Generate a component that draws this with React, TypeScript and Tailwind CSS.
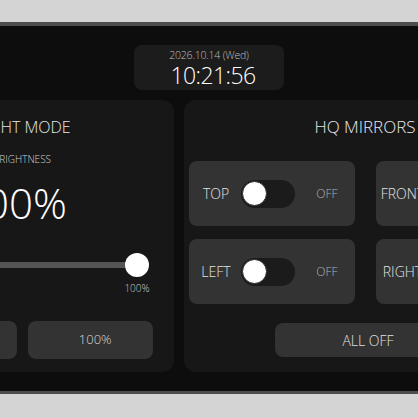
import React from 'react';

const FONT = { fontFamily: '"Open Sans", "Noto Sans", sans-serif' };

function Toggle({ on }: { on: boolean }) {
  return (
    <div className="w-[54px] h-[28px] rounded-full bg-[#1b1b1b] flex items-center px-[1px]">
      <div
        className={`w-[25px] h-[25px] rounded-full bg-white border border-[#2a2a2a] ${on ? 'ml-auto' : ''}`}
      />
    </div>
  );
}

function MirrorTile({ label, on }: { label: string; on: boolean }) {
  return (
    <div className="h-[65px] rounded-lg bg-[#333333] flex items-center pl-[5px] pr-[17px]">
      <div className="w-[44px] text-center text-[14px] text-[#e2e2e2]">{label}</div>
      <div className="ml-[3px]">
        <Toggle on={on} />
      </div>
      <div className="ml-auto text-[12px] text-[#b0b0b0]">{on ? 'ON' : 'OFF'}</div>
    </div>
  );
}

export default function App() {
  const brightness = 100;

  return (
    <div className="w-[418px] h-[418px] overflow-hidden bg-[#d4d4d4] font-light" style={FONT}>
      <div className="h-[22px]" />
      <div className="h-[372px] bg-[#0d0d0d] border-t-4 border-b-[3px] border-[#4d4d4d] flex flex-col">
        {/* clock */}
        <div className="pt-[19px] flex justify-center">
          <div className="w-[150px] h-[45px] rounded-lg bg-[#1c1c1c] flex flex-col items-center pt-[4px]">
            <div className="text-[10.5px] leading-[13px] tracking-[-0.2px] text-[#bdbdbd]">2026.10.14 (Wed)</div>
            <div className="text-[23px] leading-[26px] tracking-[-0.6px] text-white pl-[8px]">10:21:56</div>
          </div>
        </div>

        <div className="mt-[10px] flex gap-[10px] ml-[-130px]">
          {/* night mode */}
          <div className="w-[304px] h-[272px] shrink-0 rounded-xl bg-[#171717] flex flex-col pt-[15px] px-[21px]">
            <div className="text-[16px] leading-[24px] text-center text-[#e8e8e8]">NIGHT MODE</div>
            <div className="mt-[13px] pl-[102px] text-[10px] leading-[14px] text-[#cfcfcf]">BRIGHTNESS</div>
            <div className="mt-[13px] pl-[70px] text-[42px] leading-[48px] text-white">{brightness}%</div>
            <div className="mt-[26px] mr-[4px] h-[24px] relative flex items-center">
              <div className="w-full h-[6px] rounded-full bg-[#555555]" />
              <div className="absolute right-0 top-0 w-[24px] h-[24px] rounded-full bg-white" />
            </div>
            <div className="mt-[4px] mr-[4px] flex justify-end">
              <div className="w-[24px] flex justify-center text-[10px] leading-[14px] text-[#cccccc] whitespace-nowrap">
                {brightness}%
              </div>
            </div>
            <div className="mt-[26px] grid grid-cols-2 gap-[11px]">
              <button className="h-[38px] rounded-lg bg-[#333333] pl-[10px] text-[13px] text-[#d8d8d8]">50%</button>
              <button className="h-[38px] rounded-lg bg-[#333333] pl-[10px] text-[13px] text-[#d8d8d8]">100%</button>
            </div>
          </div>

          {/* mirrors */}
          <div className="w-[362px] h-[272px] shrink-0 rounded-xl bg-[#171717] flex flex-col pt-[15px] px-[5px]">
            <div className="text-[17px] leading-[24px] text-center text-[#e8e8e8]">HQ MIRRORS</div>
            <div className="mt-[22px] grid grid-cols-2 gap-x-[21px] gap-y-[13px]">
              <MirrorTile label="TOP" on={false} />
              <MirrorTile label="FRONT" on={false} />
              <MirrorTile label="LEFT" on={false} />
              <MirrorTile label="RIGHT" on={false} />
            </div>
            <button className="mt-[19px] mx-auto w-[180px] h-[34px] rounded-lg bg-[#333333] pl-[6px] text-[14px] text-[#e0e0e0]">
              ALL OFF
            </button>
          </div>
        </div>
      </div>
    </div>
  );
}
